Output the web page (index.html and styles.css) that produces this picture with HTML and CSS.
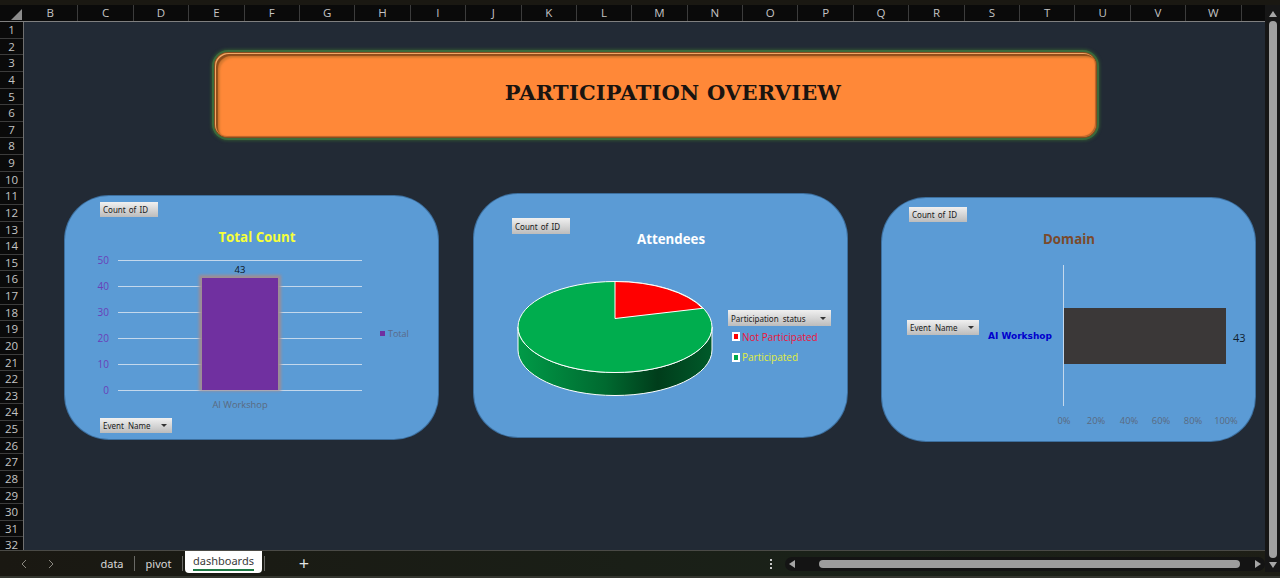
FILE: index.html
```html
<!DOCTYPE html>
<html lang="en">

<head>
   <meta charset="UTF-8">
   <title>dashboards</title>
   <link rel="stylesheet" href="styles.css">
</head>

<body>
   <div class="top-strip"></div>

   <div class="col-header">
      <div class="corner"><svg width="22" height="16" viewBox="0 0 22 16"><path d="M22 3V14H11Z" fill="#8c8c8c" /></svg></div>
      <div class="col">B</div>
      <div class="col">C</div>
      <div class="col">D</div>
      <div class="col">E</div>
      <div class="col">F</div>
      <div class="col">G</div>
      <div class="col">H</div>
      <div class="col">I</div>
      <div class="col">J</div>
      <div class="col">K</div>
      <div class="col">L</div>
      <div class="col">M</div>
      <div class="col">N</div>
      <div class="col">O</div>
      <div class="col">P</div>
      <div class="col">Q</div>
      <div class="col">R</div>
      <div class="col">S</div>
      <div class="col">T</div>
      <div class="col">U</div>
      <div class="col">V</div>
      <div class="col">W</div>
      <div class="col col-rest"></div>
   </div>

   <div class="middle">
      <div class="row-header">
         <div class="row">1</div>
         <div class="row">2</div>
         <div class="row">3</div>
         <div class="row">4</div>
         <div class="row">5</div>
         <div class="row">6</div>
         <div class="row">7</div>
         <div class="row">8</div>
         <div class="row">9</div>
         <div class="row">10</div>
         <div class="row">11</div>
         <div class="row">12</div>
         <div class="row">13</div>
         <div class="row">14</div>
         <div class="row">15</div>
         <div class="row">16</div>
         <div class="row">17</div>
         <div class="row">18</div>
         <div class="row">19</div>
         <div class="row">20</div>
         <div class="row">21</div>
         <div class="row">22</div>
         <div class="row">23</div>
         <div class="row">24</div>
         <div class="row">25</div>
         <div class="row">26</div>
         <div class="row">27</div>
         <div class="row">28</div>
         <div class="row">29</div>
         <div class="row">30</div>
         <div class="row">31</div>
         <div class="row">32</div>
      </div>

      <div class="sheet">
         <div class="banner">PARTICIPATION OVERVIEW</div>

         <!-- total count -->
         <div class="card card-total">
            <svg class="chart" viewBox="65 196 373 243">
               <text class="chart-title title-total" x="257" y="242">Total Count</text>
               <g class="grid-lines">
                  <line x1="118" x2="362" y1="260.5" y2="260.5" />
                  <line x1="118" x2="362" y1="286.5" y2="286.5" />
                  <line x1="118" x2="362" y1="312.5" y2="312.5" />
                  <line x1="118" x2="362" y1="338.5" y2="338.5" />
                  <line x1="118" x2="362" y1="364.5" y2="364.5" />
                  <line x1="118" x2="362" y1="390.5" y2="390.5" />
               </g>
               <g class="y-labels">
                  <text x="109" y="264">50</text>
                  <text x="109" y="290">40</text>
                  <text x="109" y="316">30</text>
                  <text x="109" y="342">20</text>
                  <text x="109" y="368">10</text>
                  <text x="109" y="394">0</text>
               </g>
               <rect class="bar-glow" x="199" y="275" width="82" height="116" />
               <rect x="202" y="278" width="76" height="112" fill="#7030a0" />
               <text class="data-label" x="240" y="273">43</text>
               <text class="axis-label" x="240" y="408">AI Workshop</text>
               <rect x="380" y="331" width="5" height="5" fill="#7030a0" />
               <text class="legend-total" x="388" y="337">Total</text>
            </svg>
            <div class="slicer slicer-count">Count of ID</div>
            <div class="slicer slicer-event">Event Name<span class="caret"></span></div>
         </div>

         <!-- attendees -->
         <div class="card card-attend">
            <svg class="chart" viewBox="474 194 373 243">
               <defs>
                  <linearGradient id="pieSide" x1="518" x2="712" y1="0" y2="0" gradientUnits="userSpaceOnUse">
                     <stop offset="0" stop-color="#009a47" />
                     <stop offset="0.45" stop-color="#006a30" />
                     <stop offset="0.72" stop-color="#003d1b" />
                     <stop offset="1" stop-color="#005a2a" />
                  </linearGradient>
               </defs>
               <text class="chart-title title-attend" x="671" y="244">Attendees</text>
               <path class="pie-edge" fill="url(#pieSide)" d="M518 327A97 45.5 0 0 0 712 327V350A97 45.5 0 0 1 518 350Z" />
               <ellipse class="pie-edge" cx="615" cy="327" rx="97" ry="45.5" fill="#00ad4e" />
               <path class="pie-edge" fill="#ff0000" d="M615 318.5V281.5A97 45.5 0 0 1 702.7 308.3Z" />
               <rect x="732" y="332" width="8" height="9" fill="#fff" />
               <rect x="734" y="334" width="4" height="5" fill="#ff0000" />
               <text class="legend-not" x="742" y="341">Not Participated</text>
               <rect x="732" y="353" width="8" height="9" fill="#fff" />
               <rect x="734" y="355" width="4" height="5" fill="#00a84e" />
               <text class="legend-yes" x="742" y="361">Participated</text>
            </svg>
            <div class="slicer slicer-count">Count of ID</div>
            <div class="slicer slicer-status">Participation status<span class="caret"></span></div>
         </div>

         <!-- domain -->
         <div class="card card-domain">
            <svg class="chart" viewBox="882 198 373 243">
               <text class="chart-title title-domain" x="1069" y="244">Domain</text>
               <line class="axis-line" x1="1063.5" x2="1063.5" y1="265" y2="406" />
               <rect x="1064" y="308" width="162" height="56" fill="#3b3838" />
               <text class="bar-value" x="1233" y="342">43</text>
               <text class="domain-name" x="1052" y="339">AI Workshop</text>
               <g class="pct-labels">
                  <text x="1064" y="424">0%</text>
                  <text x="1096" y="424">20%</text>
                  <text x="1129" y="424">40%</text>
                  <text x="1161" y="424">60%</text>
                  <text x="1193" y="424">80%</text>
                  <text x="1226" y="424">100%</text>
               </g>
            </svg>
            <div class="slicer slicer-count">Count of ID</div>
            <div class="slicer slicer-event">Event Name<span class="caret"></span></div>
         </div>
      </div>

      <div class="v-scroll">
         <svg class="arrow" width="8" height="6" viewBox="0 0 8 6"><path d="M4 0L8 6H0Z" /></svg>
         <div class="v-thumb"></div>
         <svg class="arrow" width="8" height="6" viewBox="0 0 8 6"><path d="M0 0H8L4 6Z" /></svg>
      </div>
   </div>

   <div class="tab-bar">
      <div class="tab-nav">
         <svg width="6" height="10" viewBox="0 0 6 10"><path d="M5 1L1 5L5 9" /></svg>
         <svg width="6" height="10" viewBox="0 0 6 10"><path d="M1 1L5 5L1 9" /></svg>
      </div>
      <div class="tabs">
         <div class="tab tab-data">data</div>
         <div class="tab-sep"></div>
         <div class="tab tab-pivot">pivot</div>
         <div class="tab-sep"></div>
         <div class="tab tab-active"><span>dashboards</span></div>
         <div class="tab-sep tab-sep-end"></div>
      </div>
      <div class="tab-add">+</div>
      <div class="tab-dots"><i></i><i></i><i></i></div>
      <div class="h-scroll">
         <svg width="6" height="8" viewBox="0 0 6 8"><path d="M6 0V8L0 4Z" /></svg>
         <div class="h-thumb"></div>
         <svg width="6" height="8" viewBox="0 0 6 8"><path d="M0 0L6 4L0 8Z" /></svg>
      </div>
   </div>
</body>

</html>
```

FILE: styles.css
```css
html,
body {
   margin: 0;
   padding: 0;
}

body {
   width: 1280px;
   height: 578px;
   overflow: hidden;
   display: flex;
   flex-direction: column;
   background-color: #222a35;
   font-family: "Open Sans", sans-serif;
}

.top-strip {
   height: 5px;
   background-color: #1a1812;
}

/* column letters */
.col-header {
   display: flex;
   height: 17px;
   background-color: #0a0a0a;
   border-bottom: 1px solid #808080;
   box-sizing: border-box;
   padding-right: 15px;
}

.corner {
   width: 23px;
   flex: none;
}

.col {
   flex: 0 0 55.4px;
   box-sizing: border-box;
   border-right: 1px solid #3c3c3c;
   text-align: center;
   color: #c4c4c4;
   font-size: 11.5px;
   line-height: 16px;
}

.col-rest {
   flex: 1;
   border-right: none;
}

.middle {
   display: flex;
   flex: 1;
   min-height: 0;
}

/* row numbers */
.row-header {
   width: 24px;
   flex: none;
   background-color: #0a0a0a;
   border-right: 1px solid #707070;
   box-sizing: border-box;
}

.row {
   height: 16.63px;
   box-sizing: border-box;
   border-bottom: 1px solid #3c3c3c;
   text-align: center;
   color: #c4c4c4;
   font-size: 11.5px;
   line-height: 16px;
}

.sheet {
   position: relative;
   flex: 1;
   background-color: #222a35;
}

.banner {
   position: absolute;
   left: 191px;
   top: 31px;
   width: 881px;
   height: 84px;
   box-sizing: border-box;
   padding: 0 0 5px 35px;
   display: flex;
   align-items: center;
   justify-content: center;
   background-color: #ff8838;
   border-radius: 13px;
   box-shadow: 0 0 0 1px #8a4c1e, 0 0 0 3px #3a6a3c, 0 0 3px 4px #2f5034,
      inset 1px 1px 0 #f2a866, inset 3px 3px 1px #8f4d1a, inset 5px 5px 2px #d97a30,
      inset -1px -1px 1px #b5642a;
   color: #1a1410;
   font-family: "DejaVu Serif", serif;
   font-weight: bold;
   font-size: 21px;
   letter-spacing: 0.2px;
}

.card {
   position: absolute;
   width: 373px;
   height: 243px;
   background-color: #5b9bd5;
   border-radius: 44px;
   box-shadow: 0 0 0 1px #3d6f9e;
}

.card-total {
   left: 41px;
   top: 174px;
}

.card-attend {
   left: 450px;
   top: 172px;
}

.card-domain {
   left: 858px;
   top: 176px;
}

.chart {
   display: block;
   width: 100%;
   height: 100%;
}

.chart text {
   font-family: "Open Sans", sans-serif;
}

.chart .chart-title {
   font-size: 13.3px;
   font-weight: bold;
   text-anchor: middle;
}

.title-total {
   fill: #f6ff3a;
}

.title-attend {
   fill: #ffffff;
}

.title-domain {
   fill: #7a4a2c;
}

.grid-lines line {
   stroke: #c4d8ec;
   stroke-width: 1;
}

.y-labels text {
   fill: #6a3fb8;
   font-size: 10px;
   text-anchor: end;
}

.bar-glow {
   fill: #a08c92;
   filter: blur(1.5px);
}

.data-label {
   fill: #0c1420;
   font-size: 9.5px;
   text-anchor: middle;
}

.axis-label {
   fill: #5a6a80;
   font-size: 9.3px;
   text-anchor: middle;
}

.legend-total {
   fill: #5a6a88;
   font-size: 9px;
}

.pie-edge {
   stroke: #ffffff;
   stroke-width: 1;
}

.legend-not {
   fill: #ee1438;
   font-size: 10px;
}

.legend-yes {
   fill: #e2ee3c;
   font-size: 10px;
}

.axis-line {
   stroke: #c4d8ec;
   stroke-width: 1;
}

.bar-value {
   fill: #10202e;
   font-size: 11px;
}

.chart .domain-name {
   fill: #0000cd;
   font-family: "DejaVu Sans", sans-serif;
   font-size: 9px;
   font-weight: bold;
   text-anchor: end;
}

.pct-labels text {
   fill: #5a6a80;
   font-size: 9.3px;
   text-anchor: middle;
}

/* pivot field buttons */
.slicer {
   position: absolute;
   box-sizing: border-box;
   display: flex;
   align-items: center;
   justify-content: space-between;
   height: 15px;
   padding: 0 3px;
   background: linear-gradient(#f0f0f0, #bcbcbc);
   color: #1a1a1a;
   font-family: "Noto Sans", sans-serif;
   font-size: 8px;
   word-spacing: 2px;
   white-space: nowrap;
}

.caret {
   width: 0;
   height: 0;
   margin-right: 2px;
   border-left: 3px solid transparent;
   border-right: 3px solid transparent;
   border-top: 3px solid #333;
}

.slicer-count {
   width: 58px;
   word-spacing: 1px;
}

.slicer-event {
   width: 72px;
}

.slicer-status {
   width: 103px;
   left: 254px;
   top: 116px;
   height: 16px;
}

.card-total .slicer-count {
   left: 35px;
   top: 6px;
}

.card-total .slicer-event {
   left: 35px;
   top: 222px;
}

.card-attend .slicer-count {
   left: 38px;
   top: 24px;
   height: 16px;
}

.card-domain .slicer-count {
   left: 27px;
   top: 9px;
}

.card-domain .slicer-event {
   left: 25px;
   top: 122px;
}

/* vertical scrollbar */
.v-scroll {
   position: relative;
   top: -17px;
   height: 567px;
   width: 15px;
   flex: none;
   box-sizing: border-box;
   padding: 6px 0 4px;
   display: flex;
   flex-direction: column;
   align-items: center;
   gap: 4px;
   background-color: #161616;
}

.v-scroll .arrow {
   flex: none;
   fill: #a6a6a6;
}

.v-thumb {
   flex: 1;
   width: 8px;
   border-radius: 4px;
   background-color: #a0a0a0;
}

/* sheet tabs */
.tab-bar {
   display: flex;
   align-items: flex-start;
   height: 28px;
   flex: none;
   box-sizing: border-box;
   border-top: 1px solid #4a4a46;
   border-bottom: 2px solid #34362f;
   background: linear-gradient(90deg, #1a1812, #1a2219 70%, #1e1e16);
}

.tab-nav {
   width: 90px;
   flex: none;
   display: flex;
   gap: 21px;
   padding: 8px 0 0 21px;
   box-sizing: border-box;
}

.tab-nav svg {
   fill: none;
   stroke: #8a8880;
   stroke-width: 1;
}

.tabs {
   display: flex;
   align-items: flex-start;
   width: 175px;
   flex: none;
   color: #d8d8d8;
   font-family: "Noto Sans", sans-serif;
   font-size: 11px;
}

.tab {
   text-align: center;
   line-height: 25px;
}

.tab-data {
   width: 44px;
}

.tab-pivot {
   width: 47px;
}

.tab-sep {
   width: 1px;
   height: 15px;
   margin-top: 5px;
   background-color: #6a6a66;
}

.tab-sep-end {
   margin-left: 2px;
}

.tab-active {
   margin-left: 2px;
   width: 77px;
   height: 22px;
   display: flex;
   justify-content: center;
   background-color: #ffffff;
   border-radius: 0 0 4px 4px;
   color: #3a3a3a;
   line-height: 20px;
}

.tab-active span {
   display: block;
   height: 18px;
   border-bottom: 2px solid #1e7a45;
}

.tab-add {
   width: 14px;
   margin-left: 32px;
   flex: none;
   color: #e4e4e4;
   font-size: 18px;
   line-height: 24px;
   text-align: center;
}

.tab-dots {
   display: flex;
   flex-direction: column;
   gap: 2px;
   margin: 8px 0 0 459px;
   width: 2px;
   flex: none;
}

.tab-dots i {
   display: block;
   width: 2px;
   height: 2px;
   background-color: #c8c8c8;
}

.h-scroll {
   display: flex;
   align-items: center;
   box-sizing: border-box;
   width: 480px;
   height: 14px;
   margin: 6px 0 0 13px;
   padding: 0 4px;
   border-radius: 7px;
   background-color: #141414;
   flex: none;
}

.h-scroll svg {
   flex: none;
   fill: #a6a6a6;
}

.h-thumb {
   width: 421px;
   height: 8px;
   margin: 0 15px 0 24px;
   border-radius: 4px;
   background-color: #9d9d9d;
}
```
